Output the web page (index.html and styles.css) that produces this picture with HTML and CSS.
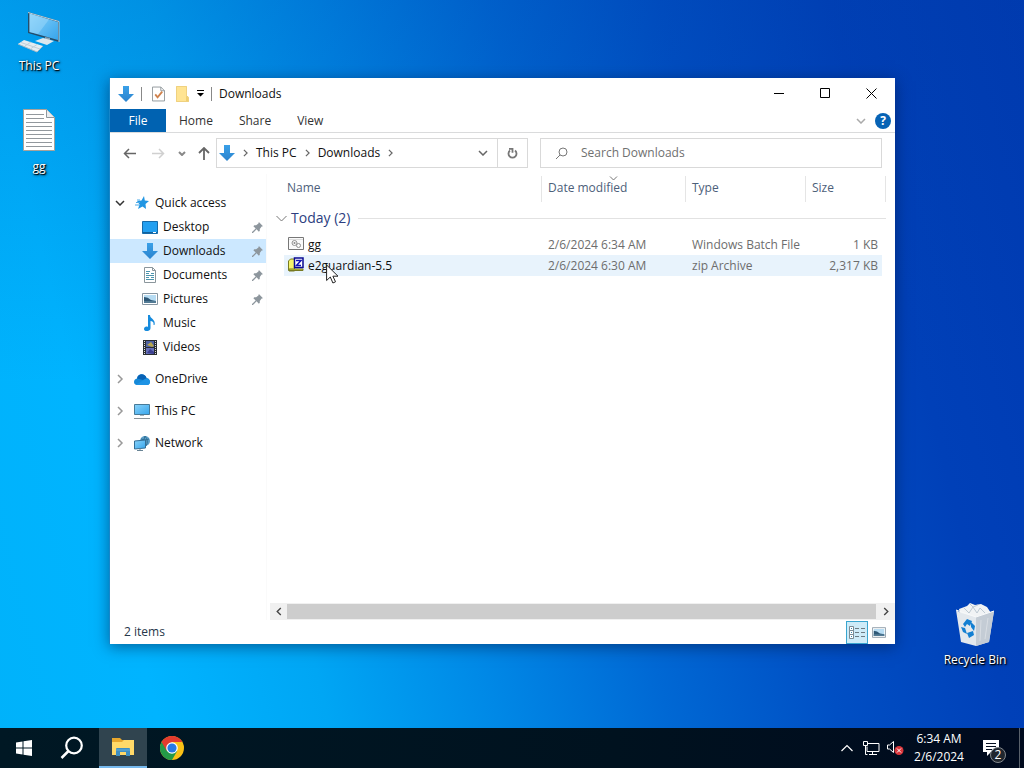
FILE: index.html
```
<!DOCTYPE html>
<html lang="en">
<head>
  <meta charset="UTF-8">
  <meta name="viewport" content="width=device-width, initial-scale=1.0">
  <title>Downloads</title>
  <link rel="stylesheet" href="styles.css">
</head>
<body>
  <!-- shared shapes -->
  <svg class="defs" width="0" height="0" aria-hidden="true">
    <defs>
      <linearGradient id="blueArrow" x1="0" y1="0" x2="0" y2="1">
        <stop offset="0" stop-color="#3aa0e8"/><stop offset="1" stop-color="#2b83cd"/>
      </linearGradient>
      <linearGradient id="screen" x1="0" y1="0" x2="1" y2="1">
        <stop offset="0" stop-color="#8ad3fa"/><stop offset="1" stop-color="#36a5ec"/>
      </linearGradient>
      <symbol id="down" viewBox="0 0 16 16"><path d="M5 0h6v8h5l-8 8-8-8h5z" fill="url(#blueArrow)"/></symbol>
      <symbol id="pin" viewBox="0 0 12 12"><path d="M7.500 0L12 4.500l-1.500.5-2 2.500v2L7.500 10.500 5 8 1 12l-1 0 0-1L4 7 1.500 4.500l1-1h2l2.500-2z" fill="#8d969d"/></symbol>
      <symbol id="right" viewBox="0 0 6 10"><path d="M1 1l4 4-4 4" fill="none" stroke="currentColor" stroke-width="1.500"/></symbol>
      <symbol id="chev" viewBox="0 0 10 6"><path d="M1 1l4 4 4-4" fill="none" stroke="currentColor" stroke-width="1.500"/></symbol>
      <symbol id="picture" viewBox="0 0 16 12">
        <path d="M.5.5h15v11H.5z" fill="#fff" stroke="#8796a2"/><path d="M2 2h12v8H2z" fill="#b7dcf3"/>
        <path d="M2 4q4 0 7 3l5 1v2H2z" fill="#2d5776"/><path d="M2 8h12v2H2z" fill="#527a94"/>
      </symbol>
    </defs>
  </svg>

  <main class="desktop">
    <button class="shortcut pc">
      <svg width="42" height="42" viewBox="0 0 42 42">
        <path d="M10 0l31 9v21L10 21z" fill="#244d6b"/><path d="M11.500 1.500L40 10v18l-28.500-8z" fill="url(#screen)"/>
        <path d="M11.500 1.500L31 7.500 20 22l-8.500-2z" fill="#a4dcfb" opacity=".45"/><path d="M10 .5l31 9V30" fill="none" stroke="#b9d2df"/>
        <path d="M27 25l5 1v4l-5-1z" fill="#8da2b1"/><path d="M17 29l8-3 11 3-7 4z" fill="#dce7ee"/>
        <path d="M0 32l6-4 19 6-6 6z" fill="#e4ecf1"/><path d="M0 32l19 8 6-6" fill="none" stroke="#a6bac7"/><path d="M3 30.500l19 6.500M7 34l6-4M13 36.500l6-4" stroke="#c0cfd9"/>
      </svg>
      <span>This PC</span>
    </button>
    <button class="shortcut text-file">
      <svg width="32" height="42" viewBox="0 0 32 42">
        <path d="M.5.5h23l8 8v33H.5z" fill="#fff" stroke="#a8a29a"/><path d="M23.500.5v8h8" fill="#e9edf0" stroke="#8f979d"/>
        <path d="M3 5.500h18M3 9.500h18M3 13.500h26M3 17.500h26M3 21.500h26M3 25.500h26M3 29.500h26M3 33.500h26M3 37.500h26" stroke="#92989d"/>
      </svg>
      <span>gg</span>
    </button>
    <button class="shortcut bin">
      <svg width="40" height="44" viewBox="0 0 40 44">
        <path d="M4 7l8-3 3-3 5 2 6-1 6 3 4 6-15 6L5 12z" fill="#f1f3f5"/><path d="M9 6l5 5 4-6 4 6 3-5 5 5M15 2l3 3 5-2" fill="none" stroke="#bdc9d2"/>
        <path d="M1 8l5 3 15 4 18-6-5 31-13 4-15-4z" fill="#e3e8ed"/><path d="M21 15l18-6-5 31-13 4z" fill="#c4ccd5"/>
        <path d="M1 8l20 7 18-6" fill="none" stroke="#f7f9fa"/><path d="M26 18l-1 21M33 16l-3 21" stroke="#d8dde3"/>
        <path d="M8 22l4-5 5 2-2 5-3-2-2 3zM16 20l4 4-1 5-3-4zM6 25l4 1 2 6-4-2zM12 31l6-2 1 4-5 3z" fill="#137fd2"/>
      </svg>
      <span>Recycle Bin</span>
    </button>

    <section class="window" aria-label="Downloads">
      <header class="titlebar">
        <svg class="title-arrow" width="16" height="16"><use href="#down"/></svg>
        <span class="bar"></span>
        <button class="quick" aria-label="Properties">
          <svg width="13" height="16" viewBox="0 0 14 16"><path d="M.5.5h9l4 4v11H.5z" fill="#fff" stroke="#8e9599"/><path d="M9.500.5v4h4" fill="none" stroke="#8e9599"/><path d="M3.500 8.500l2.500 3 5-6" fill="none" stroke="#cf824d" stroke-width="2"/></svg>
        </button>
        <button class="quick" aria-label="New folder">
          <svg width="14" height="16" viewBox="0 0 14 16"><path d="M1 0h11v10l2 1v5H1z" fill="#ffe492"/><path d="M11 10h2v5h-2z" fill="#f0cf70"/><path d="M1.500.5h10v10l2 1v4h-12z" fill="none" stroke="#efd180"/></svg>
        </button>
        <button class="customize" aria-label="Customize toolbar">
          <svg width="7" height="7" viewBox="0 0 7 7"><path d="M0 0h7v1H0zM0 3h7L3.500 6.500z"/></svg>
        </button>
        <span class="bar"></span>
        <h1>Downloads</h1>
        <div class="controls">
          <button aria-label="Minimize"><svg width="11" height="11"><path d="M0 5.500h10" stroke="#000"/></svg></button>
          <button aria-label="Maximize"><svg width="11" height="11"><path d="M.5.5h9v9h-9z" fill="none" stroke="#000"/></svg></button>
          <button aria-label="Close"><svg width="11" height="11"><path d="M.5.5l10 10M10.500.5l-10 10" stroke="#000"/></svg></button>
        </div>
      </header>

      <nav class="ribbon" aria-label="Ribbon">
        <button class="file">File</button>
        <button>Home</button>
        <button>Share</button>
        <button>View</button>
        <button class="expand" aria-label="Expand ribbon"><svg width="10" height="6"><use href="#chev"/></svg></button>
        <button class="help" aria-label="Help">?</button>
      </nav>

      <div class="navbar">
        <div class="history">
          <button aria-label="Back"><svg width="13" height="11" viewBox="0 0 13 11"><path d="M6 1L1.500 5.500 6 10M1.500 5.500H13" fill="none" stroke="#666" stroke-width="1.500"/></svg></button>
          <button aria-label="Forward"><svg width="13" height="11" viewBox="0 0 13 11"><path d="M7 1l4.500 4.500L7 10M11.500 5.500H0" fill="none" stroke="#d0d0d0" stroke-width="1.500"/></svg></button>
          <button class="recent" aria-label="Recent locations"><svg width="8" height="5" viewBox="0 0 8 5"><path d="M1 1l3 3 3-3" fill="none" stroke="#888" stroke-width="2"/></svg></button>
          <button class="up" aria-label="Up"><svg width="12" height="13" viewBox="0 0 12 13"><path d="M1 6l5-5 5 5M6 1v12" fill="none" stroke="#666" stroke-width="1.800"/></svg></button>
        </div>
        <div class="address">
          <svg width="16" height="16"><use href="#down"/></svg>
          <svg class="sep" width="5" height="8"><use href="#right"/></svg>
          <a href="#">This PC</a>
          <svg class="sep" width="5" height="8"><use href="#right"/></svg>
          <a href="#">Downloads</a>
          <svg class="sep" width="5" height="8"><use href="#right"/></svg>
          <button class="previous" aria-label="Previous locations"><svg width="10" height="6"><use href="#chev"/></svg></button>
          <button class="refresh" aria-label="Refresh"><svg width="11" height="12" viewBox="0 0 11 12"><path d="M8 3.500a4 4 0 1 1-5 0M2 1.800h3.500v4" fill="none" stroke="#777" stroke-width="1.800"/></svg></button>
        </div>
        <label class="search">
          <svg width="13" height="13" viewBox="0 0 13 13"><circle cx="8" cy="5" r="4" fill="none" stroke="#777"/><path d="M5 8l-4 4" stroke="#777"/></svg>
          <input type="text" placeholder="Search Downloads" aria-label="Search Downloads">
        </label>
      </div>

      <div class="body">
        <aside class="tree">
          <div class="group">
            <a class="root" href="#"><svg class="twist open" width="10" height="6"><use href="#chev"/></svg>
              <svg class="icon" width="16" height="14" viewBox="0 0 16 14"><path d="M10 0l.8 4.500 4.200.5-3.500 3L12 13 8.500 10.500 4 13l1.500-4.500L3 5l4.500-.5z" fill="#2196e3"/><path d="M2 6.500h4M1 9h4M3 4h3" stroke="#4dabe8"/></svg>Quick access</a>
            <a class="leaf" href="#"><svg class="icon" width="16" height="13" viewBox="0 0 16 13"><path d="M.5.5h15v12H.5z" fill="#23a0f1" stroke="#166baa"/><path d="M1 11.500h14" stroke="#10629d"/><path d="M11 11.500h3" stroke="#fff"/></svg>Desktop<svg class="pin" width="11" height="11"><use href="#pin"/></svg></a>
            <a class="leaf current" href="#"><svg class="icon" width="16" height="16"><use href="#down"/></svg>Downloads<svg class="pin" width="11" height="11"><use href="#pin"/></svg></a>
            <a class="leaf" href="#"><svg class="icon" width="16" height="16" viewBox="0 0 16 16"><path d="M2.500.5h8l3 3v12h-11z" fill="#fff" stroke="#8b969c"/><path d="M10.500.5v3h3" fill="none" stroke="#8b969c"/><path d="M4 4.500h4M4 6.500h3M9 6.500h3M4 8.500h8M4 10.500h3M9 10.500h3M4 12.500h8" stroke="#4b94ad"/></svg>Documents<svg class="pin" width="11" height="11"><use href="#pin"/></svg></a>
            <a class="leaf" href="#"><svg class="icon" width="16" height="12"><use href="#picture"/></svg>Pictures<svg class="pin" width="11" height="11"><use href="#pin"/></svg></a>
            <a class="leaf" href="#"><svg class="icon" width="16" height="16" viewBox="0 0 16 16"><path d="M6 0h2c0 4 6 4 4.500 10h-1c.5-3-1-4-3-4v7c0 4-6.500 4-6.500 1 0-2 2-3 4-2z" fill="#168bdd"/></svg>Music</a>
            <a class="leaf" href="#"><svg class="icon" width="16" height="15" viewBox="0 0 16 15"><path d="M1 0h14v15H1z" fill="#292e32"/><path d="M4 1h8v6H4z" fill="#4f62a2"/><path d="M4 8h8v6H4z" fill="#6670b9"/><path d="M5 5l4-3 3 4-2 1z" fill="#b8a74d"/><path d="M5 13l3-4 4 3v2z" fill="#3c3f91"/><path d="M2.500 1v14M13.500 1v14" stroke="#ddd" stroke-dasharray="1 1"/></svg>Videos</a>
          </div>
          <a class="root" href="#"><svg class="twist" width="6" height="10"><use href="#right"/></svg>
            <svg class="icon" width="16" height="11" viewBox="0 0 16 11"><path d="M3 11C-1 11-1 5 3 4.500 4-1 11-1 12.500 4 17 4 17 11 13 11z" fill="#1689d8"/><path d="M3 4.500C4-1 11-1 12.500 4L9 6z" fill="#0862b5"/><path d="M2 10.500L9 6.500c4-3 7-1 7 1.500s-2 3-3 3H3z" fill="#1e93e4"/></svg>OneDrive</a>
          <a class="root" href="#"><svg class="twist" width="6" height="10"><use href="#right"/></svg>
            <svg class="icon" width="16" height="15" viewBox="0 0 16 15"><path d="M.5.5h15v10H.5z" fill="url(#screen)" stroke="#477a98"/><path d="M6 11h4v1H6z" fill="#a5b3bc"/><path d="M0 14.500h16" stroke="#8a9399"/></svg>This PC</a>
          <a class="root" href="#"><svg class="twist" width="6" height="10"><use href="#right"/></svg>
            <svg class="icon" width="16" height="16" viewBox="0 0 16 16"><circle cx="11" cy="6" r="5" fill="#5d9fc9"/><path d="M11 1q-3 5 0 10M11 1q4 5 1 10M7 4q4 2 8 0" fill="none" stroke="#2f7095"/><path d="M.5 6l11-1v8l-11 1z" fill="url(#screen)" stroke="#346f96"/><path d="M3 15.500h6M6 13v3" stroke="#698495"/></svg>Network</a>
        </aside>

        <div class="content">
          <table class="files">
            <colgroup><col><col class="c-date"><col class="c-type"><col class="c-size"></colgroup>
            <thead>
              <tr><th>Name</th><th><svg class="sort" width="9" height="5" viewBox="0 0 9 5"><path d="M1 .5l3.500 3.500L8 .5" fill="none" stroke="#777"/></svg>Date modified</th><th>Type</th><th>Size</th></tr>
            </thead>
            <tbody>
              <tr><td class="day" colspan="4"><button><svg width="11" height="7" viewBox="0 0 11 7"><path d="M.5 1l5 5 5-5" fill="none" stroke="#777"/></svg>Today (2)</button></td></tr>
              <tr class="row">
                <td><svg width="16" height="14" viewBox="0 0 16 14"><path d="M.5.5h15v12H.5z" fill="#fafafa" stroke="#777"/><path d="M1 2.500h14" stroke="#ddd"/><circle cx="6.500" cy="6" r="2.500" fill="none" stroke="#929292"/><circle cx="6.500" cy="6" r="1" fill="#888"/><circle cx="10.500" cy="8.500" r="2" fill="none" stroke="#929292"/></svg>gg</td>
                <td>2/6/2024 6:34 AM</td><td>Windows Batch File</td><td>1 KB</td>
              </tr>
              <tr class="row hover">
                <td><svg width="16" height="15" viewBox="0 0 16 15"><path d="M.5 13V4l2-2h4v12H1z" fill="#f6f56a" stroke="#777a22"/><path d="M1 13.500V12h14v1.500z" fill="#ddda37" stroke="#777a22"/><path d="M6.500 1h8.500v9.500H6.500z" fill="#fff" stroke="#0a0a91" stroke-width="1.500"/><path d="M8 3.500h5L8.500 8.500H13" fill="none" stroke="#1212b6" stroke-width="1.500"/></svg>e2guardian-5.5</td>
                <td>2/6/2024 6:30 AM</td><td>zip Archive</td><td>2,317 KB</td>
              </tr>
            </tbody>
          </table>
          <div class="scrollbar">
            <button aria-label="Scroll left"><svg class="flip" width="6" height="9"><use href="#right"/></svg></button>
            <span class="thumb"></span>
            <button aria-label="Scroll right"><svg width="6" height="9"><use href="#right"/></svg></button>
          </div>
        </div>
      </div>

      <footer class="status">
        <span>2 items</span>
        <button class="view on" aria-label="Details view"><svg width="16" height="13" viewBox="0 0 16 13"><path d="M.5.5h4v4h-4zM.5 4.500h4v4h-4zM.5 8.500h4v4h-4z" fill="#fff" stroke="#7b8b94"/><path d="M6 2.500h4M12 2.500h4M6 6.500h4M12 6.500h4M6 10.500h4M12 10.500h4" stroke="#6d7b82"/><path d="M2 2.500h1M2 6.500h1M2 10.500h1" stroke="#3589af"/></svg></button>
        <button class="view" aria-label="Large icons view"><svg width="14" height="11"><use href="#picture"/></svg></button>
      </footer>
    </section>

    <svg class="cursor" width="13" height="20" viewBox="0 0 13 20"><path d="M.6 1v15.500l3.700-3.500 2.600 6 2.600-1.200-2.600-5.600H12z" fill="#fff" stroke="#222"/></svg>
  </main>

  <footer class="taskbar">
    <button aria-label="Start"><svg width="16" height="16" viewBox="0 0 16 16"><path d="M0 2.500L6.500 1.500v6H0zM7.500 1.300L16 0v7.500H7.500zM0 8.500h6.500v6L0 13.500zM7.500 8.500H16V16l-8.500-1.300z" fill="#fff"/></svg></button>
    <button aria-label="Search"><svg width="24" height="24" viewBox="0 0 24 24"><circle cx="14" cy="9.500" r="7.800" fill="none" stroke="#fff" stroke-width="2.200"/><path d="M8.500 15L1.500 22" stroke="#fff" stroke-width="2.500"/></svg></button>
    <button class="active" aria-label="File Explorer"><svg width="22" height="18" viewBox="0 0 22 18"><path d="M0 0h8l2 2h11v15H0z" fill="#e7a72d"/><path d="M0 4h10l2-2h10v15H0z" fill="#ffd968"/><path d="M4 18v-7q0-1 1-1h12q1 0 1 1v7h-4v-4H8v4z" fill="#3e8fc2"/><path d="M4 12h14" stroke="#64aed8"/></svg></button>
    <button aria-label="Chrome"><svg width="24" height="24" viewBox="0 0 24 24"><circle cx="12" cy="12" r="12" fill="#fbc116"/><path d="M12 12L1.600 6A12 12 0 0 0 12 24l5.200-9z" fill="#249a48"/><path d="M1.600 6A12 12 0 0 1 22.400 6H12l-5.200 9z" fill="#e33b2e"/><circle cx="12" cy="12" r="5.800" fill="#fff"/><circle cx="12" cy="12" r="4.600" fill="#2879e4"/></svg></button>
    <div class="tray">
      <button aria-label="Show hidden icons"><svg width="12" height="8" viewBox="0 0 12 8"><path d="M.5 7L6 1.500 11.500 7" fill="none" stroke="#fff" stroke-width="1.200"/></svg></button>
      <button aria-label="Network"><svg width="17" height="14" viewBox="0 0 17 14"><path d="M5 2.500h11v8H4v-5M9.500 11v2M6 13.500h8M.5.500h4v4h-4zM2.500 5v8.500h2" fill="none" stroke="#fff"/></svg></button>
      <button aria-label="Volume muted"><svg width="18" height="16" viewBox="0 0 18 16"><path d="M1.500 5h2L7.500 1.500v11L3.500 9h-2z" fill="none" stroke="#fff"/><circle cx="13" cy="10.500" r="4.500" fill="#db363b"/><path d="M11 8.500l4 4M15 8.500l-4 4" stroke="#fff"/></svg></button>
      <button class="clock"><span>6:34 AM</span><span>2/6/2024</span></button>
      <button class="notices" aria-label="Notifications"><svg width="16" height="16" viewBox="0 0 16 16"><path d="M0 0h16v12H8l-4 4v-4H0z" fill="#fff"/><path d="M3 3.500h10M3 6.500h10M3 9.500h6" stroke="#061021"/></svg><span class="badge">2</span></button>
      <button class="peek" aria-label="Show desktop"></button>
    </div>
  </footer>
</body>
</html>
```
FILE: styles.css
```
* {
  margin: 0;
  padding: 0;
  box-sizing: border-box;
}
html, body {
  height: 100%;
}
body {
  display: flex;
  flex-direction: column;
  overflow: hidden;
  background:
    linear-gradient(180deg, rgba(0, 60, 160, 0.2), rgba(0, 60, 160, 0) 50%),
    linear-gradient(76deg, #00b2fa 0%, #00b4ff 14%, #00a6f4 28%, #0088e6 42%, #0068d4 56%, #004fc4 70%, #0040b8 84%, #003ab2 100%);
  font-family: "Open Sans", "Noto Sans", sans-serif;
  font-size: 12px;
  line-height: 16px;
  color: #111;
}
button {
  display: flex;
  align-items: center;
  justify-content: center;
  border: none;
  background: transparent;
  font: inherit;
  color: inherit;
}
a {
  color: inherit;
  text-decoration: none;
}
svg {
  display: block;
  flex: none;
}
.defs {
  position: absolute;
}

/* desktop */
.desktop {
  position: relative;
  flex: 1;
}
.shortcut {
  position: absolute;
  width: 76px;
  flex-direction: column;
  gap: 4px;
  color: #fff;
  text-shadow: 1px 1px 1px #000, 1px 1px 3px #000;
}
.pc {
  left: 1px;
  top: 12px;
}
.text-file {
  left: 1px;
  top: 109px;
  gap: 8px;
}
.bin {
  right: 11px;
  top: 602px;
  gap: 6px;
}
.cursor {
  position: absolute;
  left: 326px;
  top: 264px;
}

/* explorer window */
.window {
  position: absolute;
  left: 109px;
  right: 129px;
  top: 78px;
  bottom: 84px;
  display: flex;
  flex-direction: column;
  background: #fff;
  border-left: 1px solid #1786c9;
  box-shadow: 0 3px 14px rgba(0, 20, 60, 0.5);
}
.titlebar {
  display: flex;
  align-items: center;
  height: 31px;
  padding-left: 8px;
}
.bar {
  width: 1px;
  height: 14px;
  background: #888;
}
.title-arrow {
  margin-right: 7px;
}
.quick {
  width: 23px;
}
.bar + .quick {
  margin-left: 5px;
}
.customize {
  width: 14px;
  margin-right: 4px;
}
.titlebar h1 {
  margin-left: 7px;
  font-size: 12px;
  font-weight: 400;
}
.controls {
  display: flex;
  align-self: stretch;
  margin: 0 1px 0 auto;
}
.controls button {
  width: 46px;
}
.ribbon {
  display: flex;
  height: 24px;
  border-bottom: 1px solid #dadbdc;
  color: #333;
}
.ribbon button {
  padding: 0 13px;
}
.ribbon .file {
  width: 56px;
  padding: 0;
  background: #0062b1;
  color: #fff;
}
.ribbon .expand {
  margin-left: auto;
  padding: 0 9px;
  color: #aaa;
}
.ribbon .help {
  align-self: center;
  width: 16px;
  height: 16px;
  margin-right: 4px;
  padding: 0;
  border-radius: 50%;
  background: #0763b5;
  color: #fff;
  font-weight: 700;
}
.navbar {
  display: flex;
  height: 41px;
  padding: 5px 13px 6px 5px;
}
.history {
  display: flex;
  align-items: center;
  width: 101px;
}
.history button {
  width: 29px;
  height: 30px;
}
.history .recent {
  width: 18px;
}
.history .up {
  width: 25px;
}
.address {
  display: flex;
  align-items: center;
  flex: 1 1 312px;
  min-width: 0;
  border: 1px solid #d9d9d9;
  padding-left: 2px;
}
.sep {
  margin: 0 8px;
  color: #666;
}
.previous {
  width: 29px;
  height: 28px;
  margin-left: auto;
  color: #666;
}
.refresh {
  width: 30px;
  height: 28px;
  border-left: 1px solid #d9d9d9;
}
.search {
  display: flex;
  align-items: center;
  flex: 1 1 342px;
  min-width: 0;
  gap: 13px;
  margin-left: 12px;
  padding-left: 14px;
  border: 1px solid #d9d9d9;
}
.search input {
  flex: 1;
  min-width: 0;
  border: none;
  outline: none;
  background: transparent;
  font: inherit;
}
.search input::placeholder {
  color: #707070;
}

/* folder tree */
.body {
  display: flex;
  flex: 1;
  min-height: 0;
}
.tree {
  width: 157px;
  padding-top: 17px;
  border-right: 1px solid #fafafa;
}
.group {
  padding-bottom: 8px;
}
.root, .leaf {
  display: flex;
  align-items: center;
  height: 24px;
}
.root {
  padding-left: 5px;
}
.root .icon {
  margin: 0 5px 0 9px;
}
.root + .root {
  margin-top: 8px;
}
.leaf {
  padding: 0 3px 0 32px;
}
.leaf .icon {
  margin-right: 5px;
}
.twist {
  width: 10px;
  color: #999;
}
.twist.open {
  color: #333;
}
.pin {
  margin-left: auto;
}
.current {
  background: #cce8ff;
}

/* file list */
.content {
  display: flex;
  flex: 1;
  flex-direction: column;
  min-width: 0;
  padding: 2px 0 0 3px;
}
.files {
  width: calc(100% - 15px);
  margin-left: 6px;
  border-collapse: separate;
  border-spacing: 0;
  table-layout: fixed;
}
.c-date {
  width: 144px;
}
.c-type {
  width: 120px;
}
.c-size {
  width: 80px;
}
.files th {
  position: relative;
  height: 26px;
  padding: 0 0 2px 6px;
  border-right: 1px solid #e5e5e5;
  font-weight: 400;
  text-align: left;
  color: #4c607a;
}
.files th:first-child {
  padding-left: 11px;
}
.sort {
  position: absolute;
  left: 67px;
  top: 0;
}
.day button {
  width: 100%;
  height: 32px;
  gap: 4px;
  font-size: 14px;
  color: #2c3e80;
}
.day button::after {
  content: "";
  flex: 1;
  height: 1px;
  margin-left: 4px;
  background: #e2e2e2;
}
.row td {
  height: 21px;
  padding-left: 6px;
  color: #6d6d6d;
  white-space: nowrap;
}
.row td:first-child {
  padding-left: 4px;
  border-left: 8px solid #fff;
  color: #111;
}
.row td:first-child svg {
  display: inline-block;
  margin-right: 4px;
  vertical-align: -2px;
}
.row td:last-child {
  padding-right: 4px;
  border-right: 4px solid #fff;
  text-align: right;
}
.hover td {
  background: #e8f3fc;
}
.scrollbar {
  display: flex;
  height: 17px;
  margin-top: auto;
  background: #f0f0f0;
}
.scrollbar button {
  width: 17px;
  color: #444;
}
.scrollbar button:last-child {
  width: 19px;
}
.thumb {
  flex: 1;
  margin: 1px 0;
  background: #cdcdcd;
}
.flip {
  transform: scaleX(-1);
}
.status {
  display: flex;
  align-items: center;
  height: 24px;
  padding: 0 5px 0 14px;
  color: #26374a;
}
.status span {
  margin-right: auto;
}
.view {
  width: 22px;
  height: 23px;
}
.view.on {
  border: 1px solid #39a5cf;
  background: #cdebf8;
}

/* taskbar */
.taskbar {
  display: flex;
  height: 40px;
  background: linear-gradient(90deg, #001824, #00121f 60%, #000a1e);
  color: #fff;
}
.taskbar > button {
  width: 48px;
}
.taskbar > .active {
  margin: 0 1px 0 3px;
  border-bottom: 2px solid #76b9ed;
  background: #30444f;
}
.tray {
  display: flex;
  margin-left: auto;
}
.tray button {
  width: 24px;
}
.tray .clock {
  flex-direction: column;
  width: 64px;
  gap: 2px;
}
.tray .notices {
  position: relative;
  width: 48px;
  padding-right: 8px;
}
.badge {
  position: absolute;
  right: 13px;
  bottom: 5px;
  width: 16px;
  height: 16px;
  border: 1px solid #84898e;
  border-radius: 50%;
  background: #20262e;
  line-height: 14px;
}
.tray .peek {
  width: 5px;
  border-left: 1px solid #59616b;
}
```
